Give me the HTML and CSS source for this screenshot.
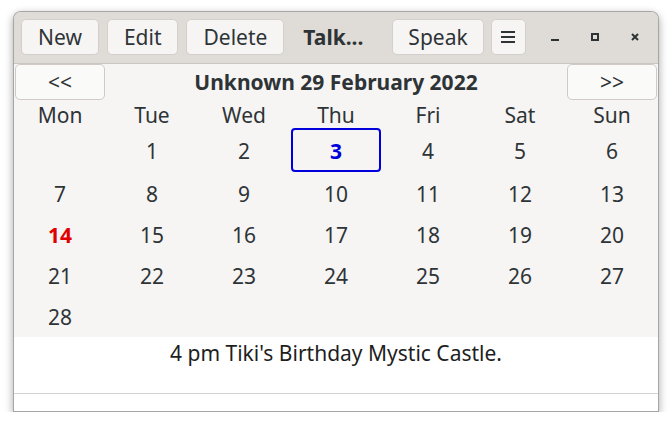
FILE: index.html
```html
<!DOCTYPE html>
<html>
<head>
<meta charset="utf-8">
<link rel="stylesheet" href="styles.css">
</head>
<body>
<div class="window">
  <div class="headerbar">
    <button class="btn">New</button>
    <button class="btn">Edit</button>
    <button class="btn">Delete</button>
    <span class="title">Talk...</span>
    <button class="btn speak">Speak</button>
    <button class="btn menu" aria-label="Menu">
      <svg width="16" height="14" viewBox="0 0 16 14"><path d="M1 2h14M1 7h14M1 12h14" stroke="#2e3436" stroke-width="2"/></svg>
    </button>
    <div class="controls">
      <span class="ctl"><svg width="10" height="10" viewBox="0 0 10 10"><path d="M1 8h8" stroke="#2e3436" stroke-width="2"/></svg></span>
      <span class="ctl"><svg width="10" height="10" viewBox="0 0 10 10"><rect x="2" y="2" width="6" height="6" fill="none" stroke="#2e3436" stroke-width="2"/></svg></span>
      <span class="ctl"><svg width="10" height="10" viewBox="0 0 10 10"><path d="M2 2l6 6M8 2l-6 6" stroke="#2e3436" stroke-width="2"/></svg></span>
    </div>
  </div>
  <div class="calendar">
    <div class="nav">
      <button class="navbtn">&lt;&lt;</button>
      <div class="month">Unknown 29 February 2022</div>
      <button class="navbtn">&gt;&gt;</button>
    </div>
    <div class="weekdays">
      <span>Mon</span><span>Tue</span><span>Wed</span><span>Thu</span><span>Fri</span><span>Sat</span><span>Sun</span>
    </div>
    <div class="days">
      <span></span><span>1</span><span>2</span><span class="selected">3</span><span>4</span><span>5</span><span>6</span>
      <span>7</span><span>8</span><span>9</span><span>10</span><span>11</span><span>12</span><span>13</span>
      <span class="today">14</span><span>15</span><span>16</span><span>17</span><span>18</span><span>19</span><span>20</span>
      <span>21</span><span>22</span><span>23</span><span>24</span><span>25</span><span>26</span><span>27</span>
      <span>28</span><span></span><span></span><span></span><span></span><span></span><span></span>
    </div>
  </div>
  <div class="event">4 pm Tiki's Birthday Mystic Castle.</div>
  <div class="entry"></div>
</div>
</body>
</html>
```
FILE: styles.css
```css
* { box-sizing: border-box; }
html, body { margin: 0; background: #ffffff; }
body {
  padding: 11px 13px 0 13px;
  font-family: "Noto Sans", "DejaVu Sans", sans-serif;
  color: #2e3436;
}
.window {
  width: 646px;
  height: 401px;
  border: 1px solid rgba(0,0,0,0.35);
  border-radius: 8px 8px 0 0;
  box-shadow: 0 3px 8px rgba(0,0,0,0.35);
  overflow: hidden;
  display: flex;
  flex-direction: column;
  background: #ffffff;
}
.headerbar {
  height: 52px;
  flex: none;
  background: #dfdcd8;
  border-bottom: 1px solid #c9c5c0;
  display: flex;
  align-items: flex-start;
  padding: 7px 3px 0 7px;
  gap: 8px;
}
.btn {
  height: 36px;
  padding: 0 16px;
  border: 1px solid #d3cfca;
  border-radius: 5px;
  background: #f6f5f4;
  font: 400 21px/1 "Noto Sans", sans-serif;
  color: #2e3436;
  display: flex;
  align-items: center;
  justify-content: center;
}
.speak { padding: 0 15px; }
.menu { width: 35px; padding: 0; margin-left: -1px; }
.title {
  height: 36px;
  min-width: 66px;
  display: flex;
  align-items: center;
  font-weight: 700;
  font-size: 21px;
  margin: 0 15px 0 11px;
}
.controls {
  display: flex;
  margin-left: auto;
}
.ctl {
  width: 40px;
  height: 36px;
  display: flex;
  align-items: center;
  justify-content: center;
}
.calendar {
  height: 273px;
  flex: none;
  background: #f6f5f4;
  display: flex;
  flex-direction: column;
}
.nav {
  display: grid;
  grid-template-columns: 92px 1fr 92px;
  height: 36px;
  flex: none;
}
.navbtn {
  margin: 0 1px;
  height: 36px;
  border: 1px solid #cfcac5;
  border-radius: 5px;
  background: #fafaf9;
  font: 400 21px/1 "Noto Sans", sans-serif;
  color: #2e3436;
}
.month {
  text-align: center;
  font-weight: 700;
  font-size: 21px;
  line-height: 36px;
}
.weekdays, .days {
  display: grid;
  grid-template-columns: repeat(7, 1fr);
  font-size: 21px;
  text-align: center;
}
.weekdays { height: 29px; line-height: 30px; }
.days { grid-template-rows: 44px 41px 41px 41px 41px; }
.days span {
  display: flex;
  align-items: center;
  justify-content: center;
  position: relative;
}
.selected { color: #0000dd; font-weight: 700; }
.selected::after {
  content: "";
  position: absolute;
  left: 1px; right: 1px; top: -1px; bottom: 1px;
  border: 2px solid #0000dd;
  border-radius: 4px;
}
.today { color: #e00000; font-weight: 700; }
.event {
  height: 57px;
  flex: none;
  text-align: center;
  font-size: 21px;
  line-height: 32px;
  color: #1e1e1e;
  border-bottom: 1px solid #d5d3d1;
}
.entry { flex: 1; background: #ffffff; }
```
